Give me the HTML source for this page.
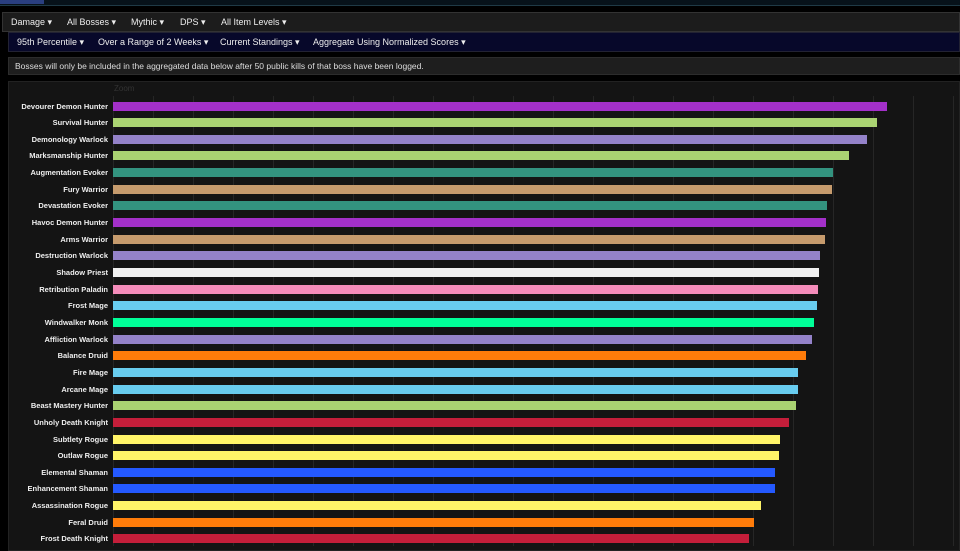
<!DOCTYPE html><html><head><style>
body{margin:0;width:960px;height:540px;overflow:hidden;background:#000;font-family:"Liberation Sans",sans-serif;position:relative}
.top{position:absolute;left:0;top:0;width:960px;height:5px;background:#07121a;border-bottom:1px solid #1f3a46}
.logo{position:absolute;left:0;top:0;width:44px;height:4px;background:#2a3f80}
.nav1{position:absolute;left:2px;top:12px;width:958px;height:20px;background:#1c1c1c;border:1px solid #333;box-sizing:border-box}
.nav2{position:absolute;left:8px;top:32px;width:952px;height:20px;background:#07082a;border:1px solid #223;box-sizing:border-box}
.nav1 span,.nav2 span{position:absolute;top:4px;color:#eee;font-size:9px;white-space:nowrap}
.note{position:absolute;left:8px;top:57px;width:952px;height:18px;background:#1e1e1e;border:1px solid #2c2c2c;box-sizing:border-box;color:#ddd;font-size:8.5px;padding:3px 6px}
.panel{position:absolute;left:8px;top:81px;width:952px;height:470px;background:#141414;border:1px solid #222;box-sizing:border-box}
.g{position:absolute;top:96px;height:450px;width:1px;background:#262626}
.lbl{position:absolute;right:852px;color:#eee;font-size:7.5px;font-weight:bold;white-space:nowrap}
.bar{position:absolute;left:113px;height:9px}
.zoom{position:absolute;left:114px;top:84px;color:#333;font-size:8px}
</style></head><body>
<div class="top"><div class="logo"></div></div>
<div class="nav1"><span style="left:8px">Damage ▾</span><span style="left:64px">All Bosses ▾</span><span style="left:128px">Mythic ▾</span><span style="left:177px">DPS ▾</span><span style="left:218px">All Item Levels ▾</span></div>
<div class="nav2"><span style="left:8px">95th Percentile ▾</span><span style="left:89px">Over a Range of 2 Weeks ▾</span><span style="left:211px">Current Standings ▾</span><span style="left:304px">Aggregate Using Normalized Scores ▾</span></div>
<div class="note">Bosses will only be included in the aggregated data below after 50 public kills of that boss have been logged.</div>
<div class="panel"></div>
<div class="zoom">Zoom</div>
<div id="c"></div>
<script>
var c=document.getElementById('c'),h='';
for(var x=113;x<960;x+=40)h+='<div class="g" style="left:'+x+'px"></div>';
var d=[["Devourer Demon Hunter",887,"#a330c9"],["Survival Hunter",877,"#aad372"],["Demonology Warlock",867,"#9482c9"],["Marksmanship Hunter",849,"#aad372"],["Augmentation Evoker",833,"#33937f"],["Fury Warrior",832,"#c69b6d"],["Devastation Evoker",827,"#33937f"],["Havoc Demon Hunter",826,"#a330c9"],["Arms Warrior",825,"#c69b6d"],["Destruction Warlock",820,"#9482c9"],["Shadow Priest",819,"#f0f0f0"],["Retribution Paladin",818,"#f48cba"],["Frost Mage",817,"#68ccef"],["Windwalker Monk",814,"#00ff98"],["Affliction Warlock",812,"#9482c9"],["Balance Druid",806,"#ff7c0a"],["Fire Mage",798,"#68ccef"],["Arcane Mage",798,"#68ccef"],["Beast Mastery Hunter",796,"#aad372"],["Unholy Death Knight",789,"#c41e3a"],["Subtlety Rogue",780,"#fff468"],["Outlaw Rogue",779,"#fff468"],["Elemental Shaman",775,"#2459ff"],["Enhancement Shaman",775,"#2459ff"],["Assassination Rogue",761,"#fff468"],["Feral Druid",754,"#ff7c0a"],["Frost Death Knight",749,"#c41e3a"]];
d.forEach(function(r,i){var y=106+i*16.65;
h+='<div class="lbl" style="top:'+(y-4.5)+'px">'+r[0]+'</div><div class="bar" style="top:'+(y-4.5)+'px;width:'+(r[1]-113)+'px;background:'+r[2]+'"></div>';});
c.innerHTML=h;
</script>
</body></html>
